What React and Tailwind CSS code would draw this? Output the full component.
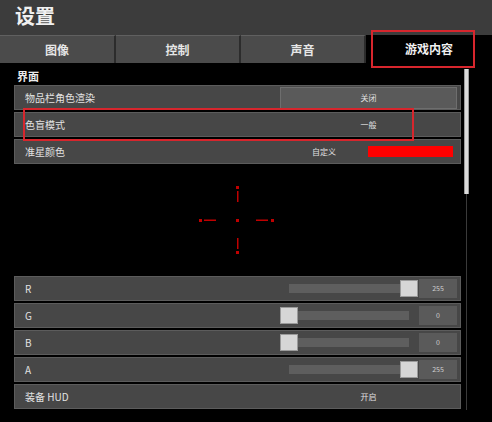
const font = { fontFamily: '"Noto Sans CJK SC", "Liberation Sans", sans-serif' }

function Row({ label, children }) {
  return (
    <div className="flex h-[25px] items-center border border-[#5c5c5c] bg-[#474747]">
      <div className="flex-1 pl-[10px] text-[10px] text-[#e2e2e2]">{label}</div>
      <div className="flex h-full w-[180px] items-center pr-[3px]">{children}</div>
    </div>
  )
}

function SliderRow({ label, value, pos }) {
  return (
    <Row label={label}>
      <div className="relative h-full w-[138px]">
        <div className="absolute left-[9px] right-[9px] top-[7px] h-[9px] bg-[#5e5e5e]" />
        <div
          className="absolute top-[3px] h-[17px] w-[18px] border border-[#9a9a9a] bg-[#d6d6d6]"
          style={{ left: pos === 'max' ? 120 : 0 }}
        />
      </div>
      <div className="ml-[1px] flex h-[19px] flex-1 items-center justify-center bg-[#5a5a5a] text-[7px] text-[#d0d0d0]">
        {value}
      </div>
    </Row>
  )
}

export default function App() {
  const tabs = ['图像', '控制', '声音']
  return (
    <div className="relative h-[422px] w-[492px] overflow-hidden bg-black" style={font}>
      {/* header */}
      <div className="h-[35px] bg-[#3c3c3c] pl-[15px] pt-[2px] text-[20px] font-bold leading-[28px] text-[#f0f0f0]">
        设置
      </div>
      {/* tabs */}
      <div className="flex h-[28px] bg-[#3c3c3c]">
        {tabs.map((t, i) => (
          <div
            key={t}
            className={
              'flex items-center justify-center border-t border-[#606060] border-r-2 border-r-[#2c2c2c] bg-[#4b4b4b] text-[12px] font-bold text-[#e6e6e6] ' +
              (i === 0 ? 'w-[116px]' : 'w-[125px]')
            }
          >
            {t}
          </div>
        ))}
        <div className="flex flex-1 items-center justify-center bg-black text-[12px] font-bold text-[#f0f0f0]">
          游戏内容
        </div>
      </div>

      {/* content */}
      <div className="flex">
        <div className="ml-[14px] w-[447px]">
          <div className="pl-[3px] pt-[5px] text-[11px] font-bold leading-[17px] text-[#eaeaea]">界面</div>
          <div className="flex flex-col gap-[2px]">
            <Row label="物品栏角色渲染">
              <div className="flex h-[22px] w-full items-center justify-center border border-[#6e6e6e] bg-[#5a5a5a] text-[8px] text-[#e0e0e0]">
                关闭
              </div>
            </Row>
            <Row label="色盲模式">
              <div className="w-full text-center text-[8px] text-[#e0e0e0]">一般</div>
            </Row>
            <Row label="准星颜色">
              <div className="flex w-[88px] justify-center text-[8px] text-[#e0e0e0]">自定义</div>
              <div className="mr-[4px] h-[11px] flex-1 bg-[#ff0000]" />
            </Row>
            <div className="flex h-[108px] items-center justify-center">
              <svg width="80" height="72" viewBox="0 0 80 72">
                <g fill="#c00000">
                  <rect x="38" y="2" width="3" height="3" />
                  <rect x="39" y="7" width="1.5" height="11" />
                  <rect x="39" y="54" width="1.5" height="11" />
                  <rect x="38" y="67" width="3" height="3" />
                  <rect x="1" y="35" width="3" height="3" />
                  <rect x="6" y="35.5" width="12" height="1.5" />
                  <rect x="58" y="35.5" width="12" height="1.5" />
                  <rect x="73" y="35" width="3" height="3" />
                  <rect x="38" y="35" width="3" height="3" />
                </g>
              </svg>
            </div>
            <SliderRow label="R" value="255" pos="max" />
            <SliderRow label="G" value="0" pos="min" />
            <SliderRow label="B" value="0" pos="min" />
            <SliderRow label="A" value="255" pos="max" />
            <Row label="装备 HUD">
              <div className="w-full text-center text-[8px] text-[#e0e0e0]">开启</div>
            </Row>
          </div>
        </div>
        {/* scrollbar */}
        <div className="ml-[3px] flex w-[5px] flex-col items-center pt-[6px]">
          <div className="h-[125px] w-[5px] border-x border-[#9c9c9c] bg-[#dcdcdc]" />
          <div className="h-[216px] w-[1px] bg-[#3a3a3a]" />
        </div>
      </div>

      {/* annotation boxes */}
      <div className="absolute left-[371px] top-[30px] h-[38px] w-[104px] border-2 border-[#d7262d]" />
      <div className="absolute left-[23px] top-[108px] h-[33px] w-[391px] border-2 border-[#d7262d]" />
    </div>
  )
}
